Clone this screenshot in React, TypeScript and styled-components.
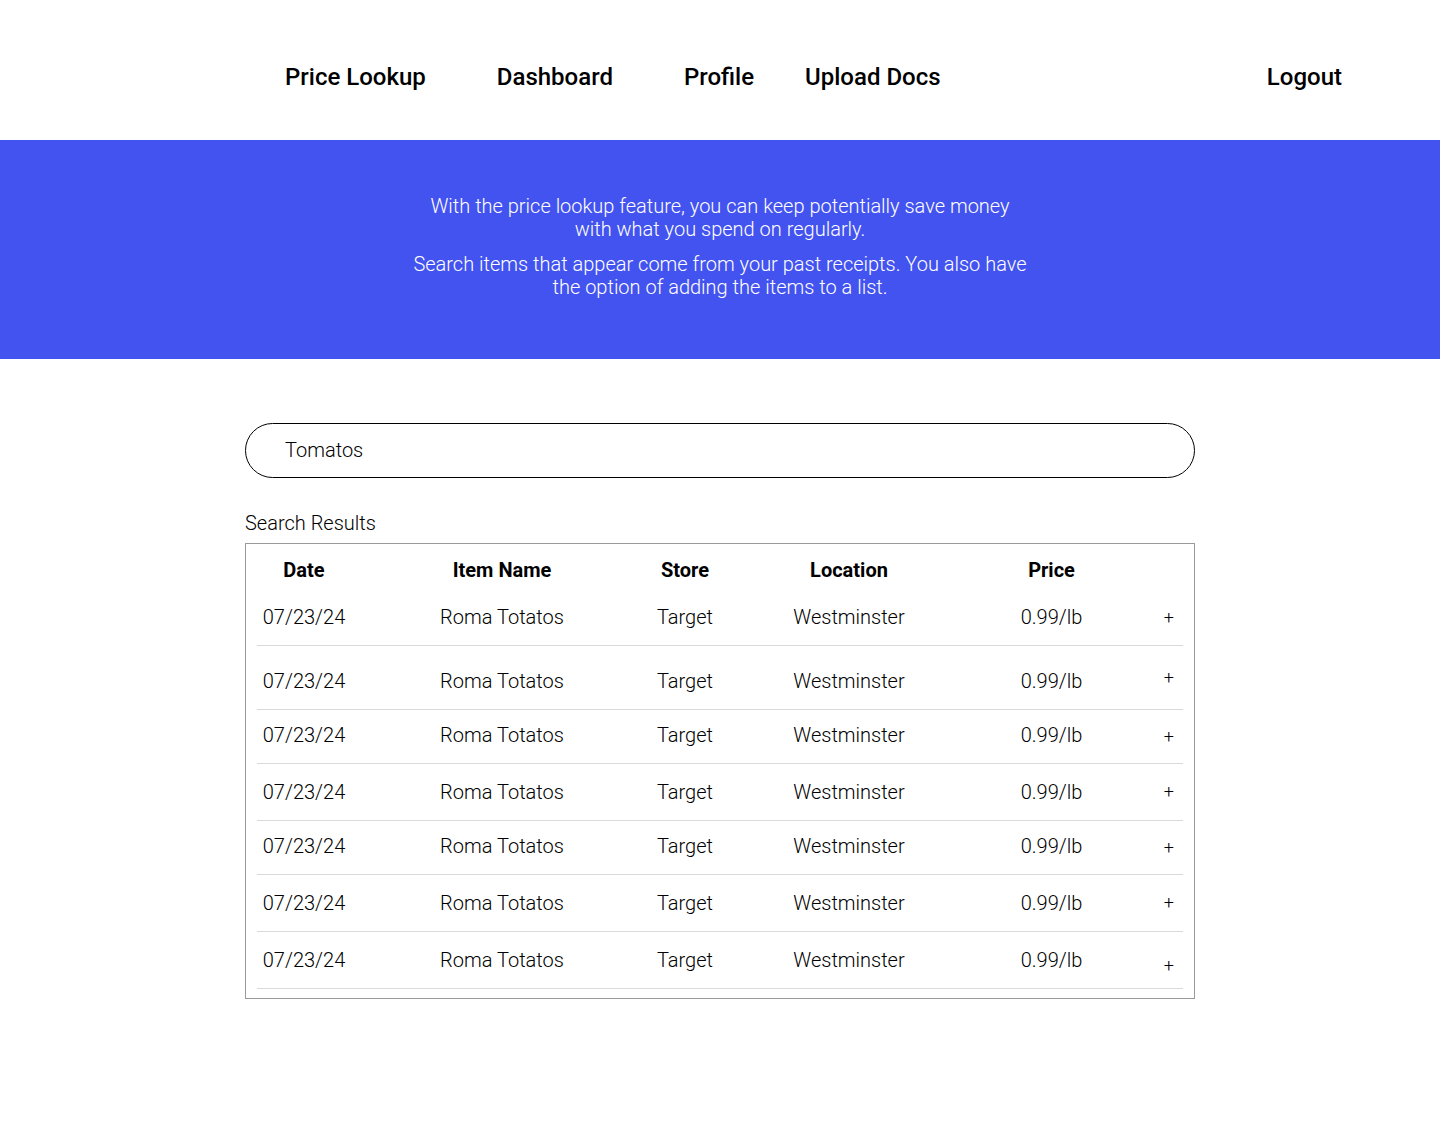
import React, { useState } from "react";
import styled, { createGlobalStyle } from "styled-components";

const GlobalStyle = createGlobalStyle`
  * { box-sizing: border-box; }
  body {
    margin: 0;
    background: #fff;
    color: #000;
    font-family: Roboto, "Liberation Sans", sans-serif;
    font-size: 20px;
    font-weight: 300;
    line-height: 23px;
  }
`;

const Header = styled.header`
  padding: 63px 98px 49px 285px;
`;

const Nav = styled.nav`
  display: flex;
  align-items: center;
`;

const NavLink = styled.a<{ $before?: number; $end?: boolean }>`
  margin-left: ${({ $before = 0, $end }) => ($end ? "auto" : `${$before}px`)};
  color: inherit;
  font-size: 24px;
  font-weight: 500;
  line-height: 28px;
  white-space: nowrap;
  text-decoration: none;
`;

const Banner = styled.section`
  display: flex;
  flex-direction: column;
  align-items: center;
  gap: 12px;
  padding: 55px 24px 60px;
  background: #4353f0;
  color: #fff;
  text-align: center;
`;

const BannerText = styled.p`
  max-width: 618px;
  margin: 0;
`;

const Main = styled.main`
  max-width: 950px;
  margin: 64px auto;
`;

const SearchInput = styled.input`
  display: block;
  width: 100%;
  height: 55px;
  padding: 0 39px 2px;
  border: 1px solid #000;
  border-radius: 28px;
  background: #fff;
  color: inherit;
  font: inherit;
`;

const ResultsTitle = styled.h2`
  margin: 34px 0 8px;
  font: inherit;
`;

const ResultsPanel = styled.div`
  padding: 0 11px 9px;
  border: 1px solid #999;
`;

const Table = styled.table`
  width: 100%;
  table-layout: fixed;
  border-collapse: collapse;
`;

const HeadCell = styled.th<{ $width: number }>`
  width: ${({ $width }) => $width}px;
  height: 46px;
  padding: 7px 0 0;
  font-weight: 700;
`;

const Row = styled.tr<{ $height: number }>`
  height: ${({ $height }) => $height}px;
  border-bottom: 1px solid #d9d9d9;
`;

const Cell = styled.td`
  padding: 0 0 16px;
  text-align: center;
  vertical-align: bottom;
`;

const ActionCell = styled.td`
  padding: 0 9px 0 0;
  vertical-align: middle;

  ${Row}:last-child & {
    padding-bottom: 11px;
    vertical-align: bottom;
  }
`;

const AddButton = styled.button`
  display: block;
  margin-left: auto;
  padding: 0;
  border: 0;
  background: none;
  color: inherit;
  font: inherit;
  font-size: 18px;
  cursor: pointer;
`;

const links = [
  { label: "Price Lookup", before: 0 },
  { label: "Dashboard", before: 71 },
  { label: "Profile", before: 71 },
  { label: "Upload Docs", before: 51 },
];

const columns = [
  { label: "Date", width: 94 },
  { label: "Item Name", width: 302 },
  { label: "Store", width: 64 },
  { label: "Location", width: 264 },
  { label: "Price", width: 141 },
];

const rowHeights = [55, 64, 54, 57, 54, 57, 57];

export default function App() {
  const [query, setQuery] = useState("Tomatos");

  return (
    <>
      <GlobalStyle />
      <Header>
        <Nav>
          {links.map(({ label, before }) => (
            <NavLink key={label} href="#" $before={before}>{label}</NavLink>
          ))}
          <NavLink href="#" $end>Logout</NavLink>
        </Nav>
      </Header>
      <Banner>
        <BannerText>
          With the price lookup feature, you can keep potentially save money with what you spend on regularly.
        </BannerText>
        <BannerText>
          Search items that appear come from your past receipts. You also have the option of adding the items to a list.
        </BannerText>
      </Banner>
      <Main>
        <SearchInput
          type="search"
          aria-label="Search items"
          value={query}
          onChange={(event) => setQuery(event.target.value)}
        />
        <ResultsTitle id="results-title">Search Results</ResultsTitle>
        <ResultsPanel>
          <Table aria-labelledby="results-title">
            <thead>
              <tr>
                {columns.map(({ label, width }) => (
                  <HeadCell key={label} scope="col" $width={width}>{label}</HeadCell>
                ))}
                <HeadCell as="td" $width={61} />
              </tr>
            </thead>
            <tbody>
              {rowHeights.map((height, index) => (
                <Row key={index} $height={height}>
                  <Cell>07/23/24</Cell>
                  <Cell>Roma Totatos</Cell>
                  <Cell>Target</Cell>
                  <Cell>Westminster</Cell>
                  <Cell>0.99/lb</Cell>
                  <ActionCell>
                    <AddButton type="button" aria-label="Add to list">+</AddButton>
                  </ActionCell>
                </Row>
              ))}
            </tbody>
          </Table>
        </ResultsPanel>
      </Main>
    </>
  );
}
